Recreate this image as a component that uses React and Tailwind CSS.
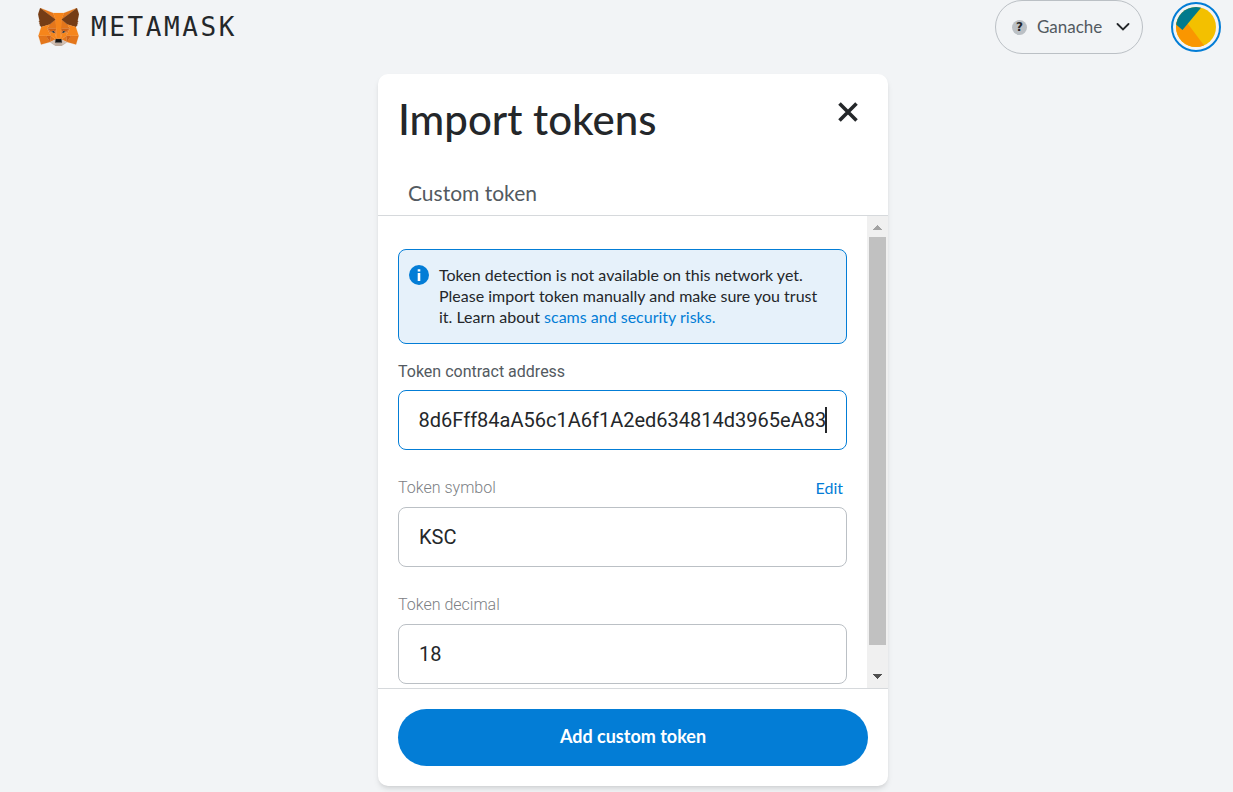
import { useEffect, useRef } from "react";

const FOX = [
  ["#e2761b", "274.1,35.5 174.6,109.4 193,65.8"],
  ["#e4761b", "44.4,35.5 143.1,110.1 125.6,65.8"],
  ["#e4761b", "238.3,206.8 211.8,247.4 268.5,263 284.8,207.7"],
  ["#e4761b", "33.9,207.7 50.1,263 106.8,247.4 80.3,206.8"],
  ["#e4761b", "103.6,138.2 87.8,162.1 144.1,164.6 142.1,104.1"],
  ["#e4761b", "214.9,138.2 175.9,103.4 174.6,164.6 230.8,162.1"],
  ["#e4761b", "106.8,247.4 140.6,230.9 111.4,208.1"],
  ["#e4761b", "177.9,230.9 211.8,247.4 207.1,208.1"],
  ["#d7c1b3", "211.8,247.4 177.9,230.9 180.6,253 180.3,262.3"],
  ["#d7c1b3", "106.8,247.4 138.3,262.3 138.1,253 140.6,230.9"],
  ["#233447", "138.8,193.5 110.6,185.2 130.5,176.1"],
  ["#233447", "179.7,193.5 188,176.1 208,185.2"],
  ["#cd6116", "106.8,247.4 111.6,206.8 80.3,207.7"],
  ["#cd6116", "207,206.8 211.8,247.4 238.3,207.7"],
  ["#cd6116", "230.8,162.1 174.6,164.6 179.8,193.5 188.1,176.1 208.1,185.2"],
  ["#cd6116", "110.6,185.2 130.6,176.1 138.8,193.5 144.1,164.6 87.8,162.1"],
  ["#e4751f", "87.8,162.1 111.4,208.1 110.6,185.2"],
  ["#e4751f", "208.1,185.2 207.1,208.1 230.8,162.1"],
  ["#e4751f", "144.1,164.6 138.8,193.5 145.4,227.6 146.9,182.7"],
  ["#e4751f", "174.6,164.6 171.9,182.6 173.1,227.6 179.8,193.5"],
  ["#f6851b", "179.8,193.5 173.1,227.6 177.9,230.9 207.1,208.1 208.1,185.2"],
  ["#f6851b", "110.6,185.2 111.4,208.1 140.6,230.9 145.4,227.6 138.8,193.5"],
  ["#c0ad9e", "180.3,262.3 180.6,253 178.1,250.8 140.4,250.8 138.1,253 138.3,262.3 106.8,247.4 117.8,256.4 140.1,271.9 178.4,271.9 200.8,256.4 211.8,247.4"],
  ["#161616", "177.9,230.9 173.1,227.6 145.4,227.6 140.6,230.9 138.1,253 140.4,250.8 178.1,250.8 180.6,253"],
  ["#763d16", "278.3,114.2 286.8,73.4 274.1,35.5 177.9,106.9 214.9,138.2 267.2,153.5 278.8,140 273.8,136.4 281.8,129.1 275.6,124.3 283.6,118.2"],
  ["#763d16", "31.8,73.4 40.3,114.2 34.9,118.2 42.9,124.3 36.8,129.1 44.8,136.4 39.8,140 51.3,153.5 103.6,138.2 140.6,106.9 44.4,35.5"],
  ["#f6851b", "267.2,153.5 214.9,138.2 230.8,162.1 207.1,208.1 238.3,207.7 284.8,207.7"],
  ["#f6851b", "103.6,138.2 51.3,153.5 33.9,207.7 80.3,207.7 111.4,208.1 87.8,162.1"],
  ["#f6851b", "174.6,164.6 177.9,106.9 193.1,65.8 125.6,65.8 140.6,106.9 144.1,164.6 145.3,182.8 145.4,227.6 173.1,227.6 173.3,182.8"],
];

function Fox() {
  return (
    <svg viewBox="31 35 256 237" className="h-[38px] w-[41px]" aria-hidden="true">
      {FOX.map(([fill, points]) => (
        <polygon key={points} points={points} fill={fill} stroke={fill} strokeWidth="1" />
      ))}
    </svg>
  );
}

function Header() {
  return (
    <header className="flex items-center justify-between pr-3 pl-[38px]">
      <a href="#home" className="flex items-center gap-3">
        <Fox />
        <span className="font-['DejaVu_Sans_Mono',monospace] text-[26px] tracking-widest">METAMASK</span>
      </a>
      <div className="flex items-center gap-7">
        <button
          type="button"
          className="flex h-[54px] w-[148px] items-center rounded-full border border-[#bbc0c5] px-4 text-[#535a61]"
        >
          <span className="flex size-[15px] items-center justify-center rounded-full bg-[#bbc0c5] font-['DejaVu_Sans',sans-serif] text-xs font-bold text-[#24272a]">
            ?
          </span>
          <span className="flex-1 pl-[10px] text-left text-[17px]">Ganache</span>
          <svg viewBox="0 0 14 8" className="-mr-2 h-2 w-[22px]" fill="none" stroke="#24272a" strokeWidth="1.800" strokeLinecap="round" aria-hidden="true">
            <path d="M1.500 1l5.500 5.500L12.500 1" />
          </svg>
        </button>
        <button
          type="button"
          aria-label="Account menu"
          className="flex size-[50px] items-center justify-center rounded-full border-2 border-[#037dd6]"
        >
          <svg viewBox="0 0 40 40" className="size-10 overflow-hidden rounded-full" aria-hidden="true">
            <rect width="40" height="40" fill="#f3c000" />
            <path d="M12 17L30 41H-2V14z" fill="#fa9600" />
            <path d="M-4 14L6.500 23L26.500 -1H-4z" fill="#017a8d" />
          </svg>
        </button>
      </div>
    </header>
  );
}

const inputStyle =
  "block h-[60px] w-full rounded-lg border bg-white px-5 font-['Roboto',sans-serif] text-xl text-[#24272a] outline-none";

function AddressField() {
  const ref = useRef(null);
  useEffect(() => {
    ref.current.scrollLeft = ref.current.scrollWidth;
  }, []);
  return (
    <div className="pt-[18px]">
      <label htmlFor="address" className="mb-2 block font-['Roboto',sans-serif] text-base leading-5 text-[#535a61]">
        Token contract address
      </label>
      <div className="relative">
        <input
          id="address"
          ref={ref}
          defaultValue="0x38d6Fff84aA56c1A6f1A2ed634814d3965eA83"
          className={`${inputStyle} border-[#037dd6] caret-transparent`}
        />
        <span className="absolute top-[17px] right-5 h-[26px] w-[2px] bg-[#24272a]" aria-hidden="true" />
      </div>
    </div>
  );
}

function Field({ id, label, value, action }) {
  return (
    <div className="pt-7">
      <div className="mb-[9px] flex h-5 items-center justify-between pr-1">
        <label htmlFor={id} className="font-['Roboto',sans-serif] text-base leading-5 font-light text-[#7c8084]">
          {label}
        </label>
        {action && (
          <button type="button" className="text-base leading-5 text-[#037dd6]">
            {action}
          </button>
        )}
      </div>
      <input id={id} defaultValue={value} className={`${inputStyle} border-[#bbc0c5]`} />
    </div>
  );
}

function ScrollTrack() {
  return (
    <div className="flex w-[21px] shrink-0 flex-col items-center bg-[#f0f0f0]" aria-hidden="true">
      <svg viewBox="0 0 21 21" className="size-[21px] shrink-0" shapeRendering="crispEdges">
        <path d="M6 14h9L10.500 9z" fill="#a3a3a3" />
      </svg>
      <div className="w-[17px] flex-1 bg-[#c1c1c1]" />
      <div className="h-[22px]" />
      <svg viewBox="0 0 21 21" className="size-[21px] shrink-0" shapeRendering="crispEdges">
        <path d="M6 7h9L10.500 12z" fill="#505050" />
      </svg>
    </div>
  );
}

export default function App() {
  return (
    <div className="min-h-screen bg-[#f2f4f6] pb-[6px] font-['Lato',sans-serif] text-[#24272a]">
      <Header />
      <div className="flex justify-center pt-5 pl-[33px]">
        <main className="w-full max-w-[510px] overflow-hidden rounded-[10px] bg-white shadow-md">
          <div className="border-b border-[#d6d9dc] px-5 pt-[18px]">
            <div className="flex items-start justify-between">
              <h1 className="text-[42px] leading-[54px] font-medium">Import tokens</h1>
              <button type="button" aria-label="Close" className="mt-[10px] mr-[10px]">
                <svg viewBox="0 0 20 20" className="size-5" stroke="#24272a" strokeWidth="3.600" aria-hidden="true">
                  <path d="M1.500 1.500l17 17M18.500 1.500l-17 17" />
                </svg>
              </button>
            </div>
            <button type="button" className="mt-6 block px-[10px] pt-2 pb-2 text-[21px] leading-[29px] text-[#535a61]">
              Custom token
            </button>
          </div>
          <div className="flex">
            <div className="min-w-0 flex-1 px-5 pt-[33px] pb-1">
              <div className="flex gap-[10px] rounded-lg border border-[#037dd6] bg-[#e6f1fa] px-[10px] pt-[14px] pb-4">
                <svg viewBox="0 0 20 20" className="mt-px size-5 shrink-0" aria-hidden="true">
                  <circle cx="10" cy="10" r="10" fill="#037dd6" />
                  <path d="M8.700 4.200h2.600v2.300H8.700zM8.700 8h2.600v8H8.700z" fill="#fff" />
                </svg>
                <p className="text-base leading-[21px]">
                  Token detection is not available on this network yet.
                  <br />
                  Please import token manually and make sure you trust
                  <br />
                  it. Learn about{" "}
                  <a href="#security" className="text-[#037dd6]">
                    scams and security risks.
                  </a>
                </p>
              </div>
              <AddressField />
              <Field id="symbol" label="Token symbol" value="KSC" action="Edit" />
              <Field id="decimal" label="Token decimal" value="18" />
            </div>
            <ScrollTrack />
          </div>
          <div className="border-t border-[#d6d9dc] p-5">
            <button type="button" className="block h-[57px] w-full rounded-full bg-[#037dd6] pb-1 text-lg font-bold text-white">
              Add custom token
            </button>
          </div>
        </main>
      </div>
    </div>
  );
}
